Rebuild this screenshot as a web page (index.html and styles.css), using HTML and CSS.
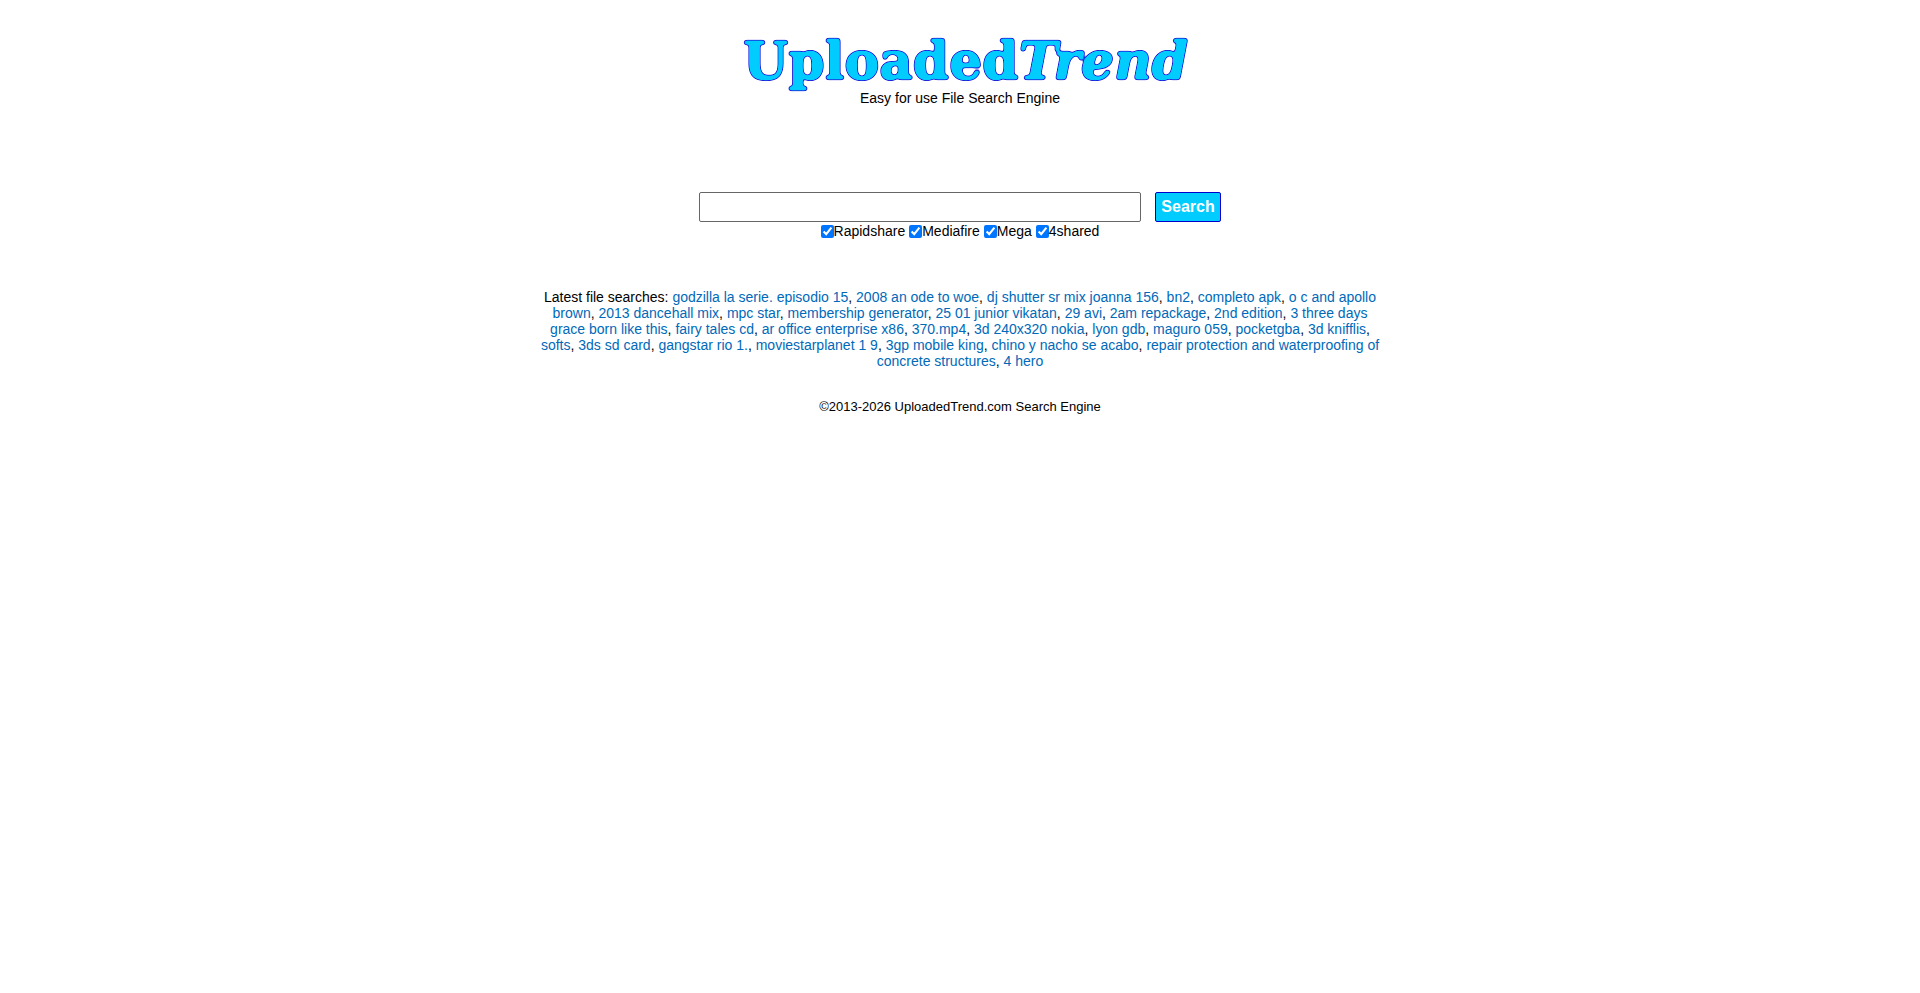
FILE: index.html
```
<!DOCTYPE html>
<html lang="en">
<head>
<meta charset="utf-8">
<title>UploadedTrend</title>
<link rel="stylesheet" href="styles.css">
</head>
<body>
<header class="header">
<h1 class="logo">
<svg class="logo-art" width="480" height="64" viewBox="0 0 480 64">
<defs>
<!-- Rounds the letter corners and draws a thin blue edge -->
<filter id="soft" x="-5%" y="-20%" width="110%" height="140%" color-interpolation-filters="sRGB">
<feGaussianBlur in="SourceGraphic" stdDeviation="1.5" result="b"/>
<feColorMatrix in="b" type="matrix" values="0 0 0 0 0.1  0 0 0 0 0.1  0 0 0 0 0.85  0 0 0 5 -1.2" result="edge"/>
<feColorMatrix in="b" type="matrix" values="0 0 0 0 0  0 0 0 0 0.8  0 0 0 0 1  0 0 0 5 -2.2" result="fill"/>
<feMerge><feMergeNode in="edge"/><feMergeNode in="fill"/></feMerge>
</filter>
</defs>
<text class="logo-text" x="23" y="47" filter="url(#soft)">Uploaded<tspan class="logo-slant">Trend</tspan></text>
</svg>
</h1>
<p class="tagline">Easy for use File Search Engine</p>
</header>
<main>
<form class="search">
<div class="search-row">
<input class="query" type="text" aria-label="Search files">
<button class="submit" type="button">Search</button>
</div>
<div class="hosts">
<label><input type="checkbox" checked>Rapidshare</label>
<label><input type="checkbox" checked>Mediafire</label>
<label><input type="checkbox" checked>Mega</label>
<label><input type="checkbox" checked>4shared</label>
</div>
</form>
<p class="latest">Latest file searches:
<a href="#">godzilla la serie. episodio 15</a>,
<a href="#">2008 an ode to woe</a>,
<a href="#">dj shutter sr mix joanna 156</a>,
<a href="#">bn2</a>,
<a href="#">completo apk</a>,
<a href="#">o c and apollo brown</a>,
<a href="#">2013 dancehall mix</a>,
<a href="#">mpc star</a>,
<a href="#">membership generator</a>,
<a href="#">25 01 junior vikatan</a>,
<a href="#">29 avi</a>,
<a href="#">2am repackage</a>,
<a href="#">2nd edition</a>,
<a href="#">3 three days grace born like this</a>,
<a href="#">fairy tales cd</a>,
<a href="#">ar office enterprise x86</a>,
<a href="#">370.mp4</a>,
<a href="#">3d 240x320 nokia</a>,
<a href="#">lyon gdb</a>,
<a href="#">maguro 059</a>,
<a href="#">pocketgba</a>,
<a href="#">3d knifflis</a>,
<a href="#">softs</a>,
<a href="#">3ds sd card</a>,
<a href="#">gangstar rio 1.</a>,
<a href="#">moviestarplanet 1 9</a>,
<a href="#">3gp mobile king</a>,
<a href="#">chino y nacho se acabo</a>,
<a href="#">repair protection and waterproofing of concrete structures</a>,
<a href="#">4 hero</a></p>
</main>
<footer class="footer">©2013-2026 UploadedTrend.com Search Engine</footer>
</body>
</html>
```
FILE: styles.css
```
* {
  box-sizing: border-box;
}

body {
  margin: 0;
  padding: 32px 16px;
  background: #fff;
  color: #000;
  font-family: "Liberation Sans", Arial, sans-serif;
  font-size: 14px;
  line-height: 16px;
  text-align: center;
}

.header {
  margin-bottom: 86px;
}

.logo {
  margin: 0;
}

.logo-art {
  display: block;
  max-width: 100%;
  margin: 0 auto -6px;
  overflow: visible;
}

.logo-text {
  fill: #0cf;
  stroke: #0cf;
  stroke-width: 1px;
  font-family: "DejaVu Serif", serif;
  font-size: 52px;
  font-weight: bold;
}

.logo-slant {
  font-style: italic;
}

.tagline {
  margin: 0;
}

.search-row {
  display: flex;
  justify-content: center;
  gap: 14px;
}

.query {
  width: 442px;
  height: 30px;
  padding: 2px 4px;
  border: 1px solid #666;
  border-radius: 2px;
  font: 16px "Liberation Sans", Arial, sans-serif;
}

.submit {
  height: 30px;
  padding: 0 5px;
  border: 1px solid #00c;
  border-radius: 2px;
  background: #0cf;
  color: #fff;
  font: bold 16px "Liberation Sans", Arial, sans-serif;
}

.hosts {
  display: flex;
  flex-wrap: wrap;
  justify-content: center;
  gap: 4px;
  padding-top: 1px;
}

.hosts label {
  display: flex;
  align-items: center;
}

.hosts input {
  width: 13px;
  height: 13px;
  margin: 0;
}

.latest {
  max-width: 840px;
  margin: 50px auto 30px;
}

.latest a {
  color: #0069b9;
  text-decoration: none;
}

.footer {
  font-size: 13px;
}
```
